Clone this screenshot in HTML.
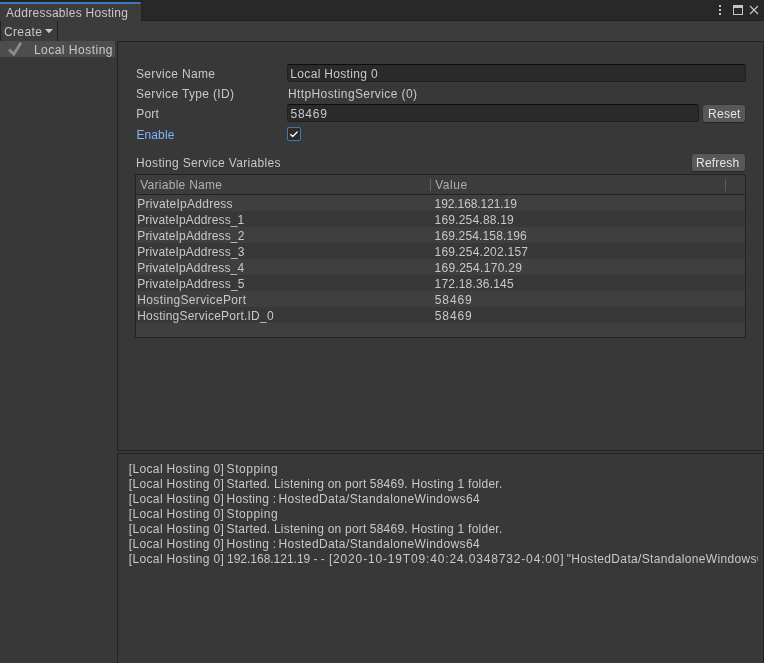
<!DOCTYPE html>
<html><head><meta charset="utf-8"><title>Addressables Hosting</title>
<style>
html,body{margin:0;padding:0;}
body{width:764px;height:663px;overflow:hidden;background:#383838;font-family:"Liberation Sans",sans-serif;font-size:12px;color:#c8c8c8;position:relative;}
.a{position:absolute;}
.t{position:absolute;white-space:nowrap;line-height:16px;height:16px;}
.fld{position:absolute;box-sizing:border-box;background:#2a2a2a;border:1px solid #212121;border-top-color:#0d0d0d;border-radius:3px;}
.btn{position:absolute;box-sizing:border-box;background:#585858;border:0 solid #242424;border-bottom:1px solid #262626;border-radius:3px;box-shadow:0 0 0 0.5px rgba(40,40,40,.45);}
.row{position:absolute;left:136px;width:609px;height:16px;}
/*AUTO*/
#t1{letter-spacing:0.265px}
#t2{letter-spacing:0.366px}
#t3{letter-spacing:0.490px}
#t4{letter-spacing:0.328px}
#t5{letter-spacing:0.345px}
#t6{letter-spacing:0.197px}
#t7{letter-spacing:0.124px}
#t8{letter-spacing:0.322px}
#t9{letter-spacing:0.396px}
#t10{letter-spacing:0.744px}
#t11{letter-spacing:0.241px}
#t12{letter-spacing:0.335px}
#t13{letter-spacing:0.197px}
#t14{letter-spacing:0.269px}
#t15{letter-spacing:0.521px}
#r1a{letter-spacing:0.261px}
#r1b{letter-spacing:-0.088px}
#r2a{letter-spacing:0.137px}
#r2b{letter-spacing:0.209px}
#r3a{letter-spacing:0.133px}
#r3b{letter-spacing:0.149px}
#r4a{letter-spacing:0.144px}
#r4b{letter-spacing:0.240px}
#r5a{letter-spacing:0.118px}
#r5b{letter-spacing:0.297px}
#r6a{letter-spacing:0.144px}
#r6b{letter-spacing:0.198px}
#r7a{letter-spacing:0.351px}
#r7b{letter-spacing:0.896px}
#r8a{letter-spacing:0.227px}
#r8b{letter-spacing:0.904px}
#l1a{letter-spacing:0.354px}
#l1b{letter-spacing:0.526px}
#l2a{letter-spacing:0.354px}
#l2b{letter-spacing:0.233px}
#l2c{letter-spacing:0.252px}
#l3a{letter-spacing:0.354px}
#l3b{letter-spacing:0.283px}
#l3c{letter-spacing:0.407px}
#l4a{letter-spacing:0.354px}
#l4b{letter-spacing:0.526px}
#l5a{letter-spacing:0.354px}
#l5b{letter-spacing:0.233px}
#l5c{letter-spacing:0.252px}
#l6a{letter-spacing:0.354px}
#l6b{letter-spacing:0.283px}
#l6c{letter-spacing:0.407px}
#l7a{letter-spacing:0.354px}
#l7b{letter-spacing:-0.013px}
#l7c{letter-spacing:0.842px}
#l7d{letter-spacing:0.334px}
/*END*/
</style></head><body>
<!-- tab bar -->
<div class="a" style="left:0;top:0;width:764px;height:21px;background:#282828"></div>
<div class="a" style="left:141px;top:20px;width:623px;height:1px;background:#212121"></div>
<div class="a" style="left:141px;top:0;width:1px;height:20px;background:#232323"></div>
<div class="a" style="left:0;top:0;width:141px;height:2px;background:#222222"></div>
<div class="a" style="left:0;top:2px;width:141px;height:19px;background:#3c3c3c"></div>
<div class="a" style="left:0;top:2px;width:141px;height:2px;background:#3a79bb;border-top-right-radius:2px"></div>
<!-- toolbar -->
<div class="a" style="left:0;top:21px;width:764px;height:20px;background:#3c3c3c"></div>
<div class="a" style="left:0;top:21px;width:1px;height:20px;background:#232323"></div>
<div class="a" style="left:57px;top:21px;width:1px;height:20px;background:#232323"></div>
<svg class="a" style="left:45px;top:28px" width="9" height="7" viewBox="0 0 9 7"><path d="M0 1 L8 1 L4 5.3 Z" fill="#c8c8c8"/></svg>
<!-- left list -->
<div class="a" style="left:0;top:41px;width:115px;height:16px;background:#4d4d4d;overflow:hidden">
<svg class="a" style="left:0;top:0" width="30" height="16" viewBox="0 0 30 16"><path d="M9.1 8.45 L13.75 13.2 L20.95 1.75" fill="none" stroke="#8c8c8c" stroke-width="2.8"/></svg>
</div>
<!-- right top panel -->
<div class="a" style="left:117px;top:41px;width:647px;height:410px;box-sizing:border-box;border:1px solid #232323;background:#383838"></div>
<div class="fld" style="left:287px;top:64px;width:459px;height:18px"></div>
<div class="fld" style="left:287px;top:104px;width:412px;height:18px"></div>
<div class="btn" style="left:703px;top:105px;width:42px;height:18px"></div>
<div class="a" style="left:287px;top:127px;width:14px;height:14px;box-sizing:border-box;border:1px solid #3a79bb;border-radius:2px;background:#2a2a2a"></div>
<svg class="a" style="left:287px;top:127px" width="14" height="14" viewBox="0 0 14 14"><path d="M3.7 7.5 L5.7 9.4 L10.2 4.9" fill="none" stroke="#f2f2f2" stroke-width="1.4" stroke-linecap="round" stroke-linejoin="round"/></svg>
<div class="btn" style="left:692px;top:154px;width:53px;height:18px"></div>
<!-- table -->
<div class="a" style="left:135px;top:174px;width:611px;height:164px;box-sizing:border-box;border:1px solid #232323;background:#383838"></div>
<div class="a" style="left:136px;top:175px;width:609px;height:19px;background:#3c3c3c"></div>
<div class="a" style="left:136px;top:194px;width:609px;height:1px;background:#232323"></div>
<div class="a" style="left:430px;top:179px;width:1px;height:12px;background:#666"></div>
<div class="a" style="left:725px;top:179px;width:1px;height:12px;background:#5e5e5e"></div>
<div class="row" style="top:195px;background:#3f3f3f"></div>
<div class="row" style="top:227px;background:#3f3f3f"></div>
<div class="row" style="top:259px;background:#3f3f3f"></div>
<div class="row" style="top:291px;background:#3f3f3f"></div>
<div class="row" style="top:323px;background:#3f3f3f;height:14px"></div>
<!-- log panel -->
<div class="a" style="left:117px;top:453px;width:647px;height:211px;box-sizing:border-box;border:1px solid #232323;border-bottom:none;background:#383838"></div>
<!-- window icons -->
<div class="a" style="left:719px;top:5px;width:2px;height:2px;background:#c4c4c4"></div>
<div class="a" style="left:719px;top:9px;width:2px;height:2px;background:#c4c4c4"></div>
<div class="a" style="left:719px;top:13px;width:2px;height:2px;background:#c4c4c4"></div>
<div class="a" style="left:733px;top:5px;width:10px;height:10px;box-sizing:border-box;border:1px solid #c4c4c4;border-top-width:3px"></div>
<svg class="a" style="left:749px;top:5px" width="10" height="10" viewBox="0 0 10 10"><path d="M1 1 L9 9 M9 1 L1 9" stroke="#c4c4c4" stroke-width="1.2" fill="none"/></svg>
<!-- text layer -->
<div class="a" id="fg" style="left:0;top:0;width:764px;height:663px;will-change:transform">
<div class="a" style="left:0;top:41px;width:115px;height:16px;overflow:hidden"><span class="t" id="t3" style="left:33.90px;top:1px;">Local Hosting<span style="margin-left:-1.6px"> 0</span></span></div>
<span class="t" id="t1" style="left:6.05px;top:5px;">Addressables Hosting</span>
<span class="t" id="t2" style="left:3.97px;top:24px;">Create</span>
<span class="t" id="t4" style="left:136.00px;top:66px;">Service Name</span>
<span class="t" id="t5" style="left:136.00px;top:86px;">Service Type (ID)</span>
<span class="t" id="t6" style="left:136.28px;top:106px;">Port</span>
<span class="t" id="t7" style="left:136.39px;top:127px;color:#81b4ff">Enable</span>
<span class="t" id="t8" style="left:290.33px;top:66px;">Local Hosting 0</span>
<span class="t" id="t9" style="left:287.93px;top:86px;">HttpHostingService (0)</span>
<span class="t" id="t10" style="left:290.53px;top:106px;">58469</span>
<span class="t" id="t11" style="left:708.07px;top:106px;color:#e4e4e4">Reset</span>
<span class="t" id="t12" style="left:136.05px;top:155px;">Hosting Service Variables</span>
<span class="t" id="t13" style="left:696.04px;top:155px;color:#e4e4e4">Refresh</span>
<span class="t" id="t14" style="left:140.24px;top:177px;color:#b0b0b0">Variable Name</span>
<span class="t" id="t15" style="left:435.24px;top:177px;color:#b0b0b0">Value</span>
<span class="t" id="r1a" style="left:137.33px;top:196px;">PrivateIpAddress</span>
<span class="t" id="r1b" style="left:434.61px;top:196px;">192.168.121.19</span>
<span class="t" id="r2a" style="left:137.21px;top:212px;">PrivateIpAddress_1</span>
<span class="t" id="r2b" style="left:434.52px;top:212px;">169.254.88.19</span>
<span class="t" id="r3a" style="left:137.33px;top:228px;">PrivateIpAddress_2</span>
<span class="t" id="r3b" style="left:434.61px;top:228px;">169.254.158.196</span>
<span class="t" id="r4a" style="left:137.21px;top:244px;">PrivateIpAddress_3</span>
<span class="t" id="r4b" style="left:434.52px;top:244px;">169.254.202.157</span>
<span class="t" id="r5a" style="left:137.33px;top:260px;">PrivateIpAddress_4</span>
<span class="t" id="r5b" style="left:434.61px;top:260px;">169.254.170.29</span>
<span class="t" id="r6a" style="left:137.21px;top:276px;">PrivateIpAddress_5</span>
<span class="t" id="r6b" style="left:434.52px;top:276px;">172.18.36.145</span>
<span class="t" id="r7a" style="left:137.33px;top:292px;">HostingServicePort</span>
<span class="t" id="r7b" style="left:434.80px;top:292px;">58469</span>
<span class="t" id="r8a" style="left:137.21px;top:308px;">HostingServicePort.ID_0</span>
<span class="t" id="r8b" style="left:434.78px;top:308px;">58469</span>
<div class="a" id="log" style="left:0;top:462px;width:758px;height:120px;overflow:hidden">
<span class="t" id="l1a" style="left:128.75px;top:0px;line-height:15px">[Local Hosting 0] </span><span class="t" id="l1b" style="left:226.61px;top:0px;line-height:15px">Stopping</span>
<span class="t" id="l2a" style="left:128.75px;top:15px;line-height:15px">[Local Hosting 0] </span><span class="t" id="l2b" style="left:226.50px;top:15px;line-height:15px">Started. Listening on port </span><span class="t" id="l2c" style="left:369.71px;top:15px;line-height:15px">58469. Hosting 1 folder.</span>
<span class="t" id="l3a" style="left:128.75px;top:30px;line-height:15px">[Local Hosting 0] </span><span class="t" id="l3b" style="left:226.52px;top:30px;line-height:15px">Hosting : </span><span class="t" id="l3c" style="left:278.51px;top:30px;line-height:15px">HostedData/StandaloneWindows64</span>
<span class="t" id="l4a" style="left:128.75px;top:45px;line-height:15px">[Local Hosting 0] </span><span class="t" id="l4b" style="left:226.61px;top:45px;line-height:15px">Stopping</span>
<span class="t" id="l5a" style="left:128.75px;top:60px;line-height:15px">[Local Hosting 0] </span><span class="t" id="l5b" style="left:226.50px;top:60px;line-height:15px">Started. Listening on port </span><span class="t" id="l5c" style="left:369.71px;top:60px;line-height:15px">58469. Hosting 1 folder.</span>
<span class="t" id="l6a" style="left:128.75px;top:75px;line-height:15px">[Local Hosting 0] </span><span class="t" id="l6b" style="left:226.52px;top:75px;line-height:15px">Hosting : </span><span class="t" id="l6c" style="left:278.51px;top:75px;line-height:15px">HostedData/StandaloneWindows64</span>
<span class="t" id="l7a" style="left:128.75px;top:90px;line-height:15px">[Local Hosting 0] </span><span class="t" id="l7b" style="left:227.00px;top:90px;line-height:15px">192.168.121.19 - - </span><span class="t" id="l7c" style="left:328.90px;top:90px;line-height:15px">[2020-10-19T09:40:24.0348732-04:00] </span><span class="t" id="l7d" style="left:566.75px;top:90px;line-height:15px">&quot;HostedData/StandaloneWindows64/catalog.json&quot; 200</span>
</div>
</div>
</body></html>
